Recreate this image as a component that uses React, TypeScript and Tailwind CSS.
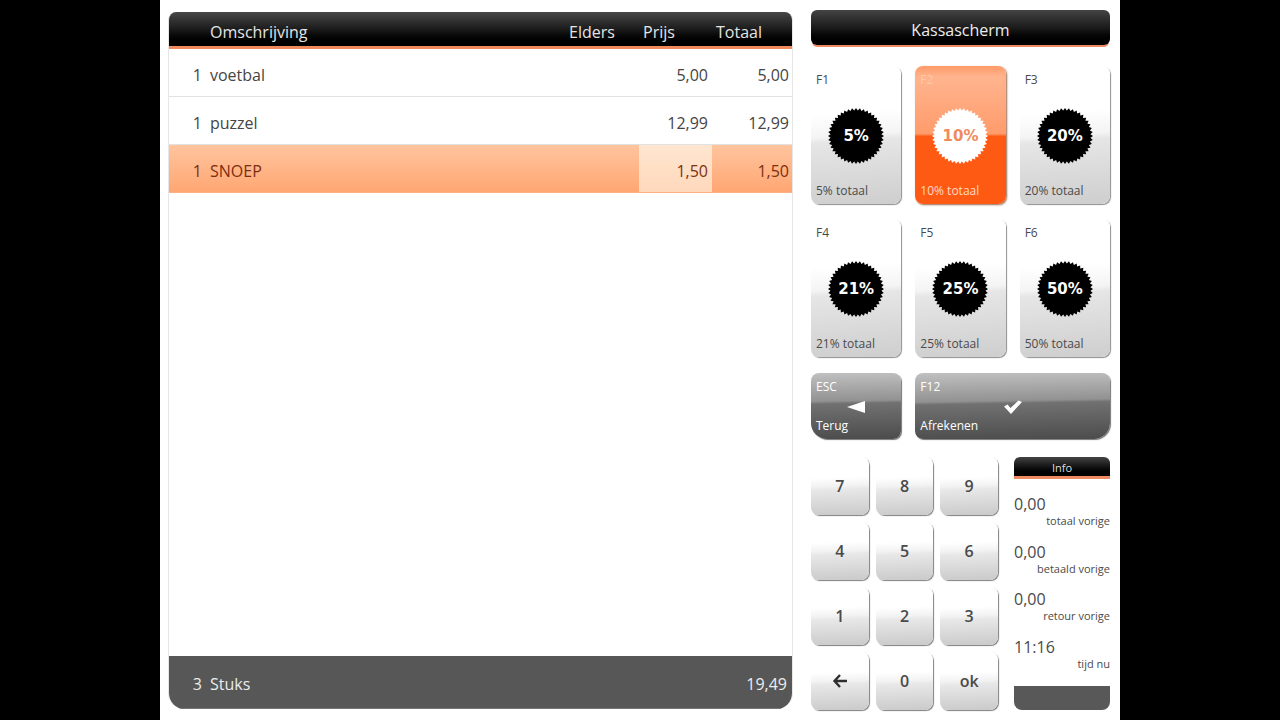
import { useState } from "react";

const lines = [
  { qty: 1, name: "voetbal", price: "5,00", total: "5,00" },
  { qty: 1, name: "puzzel", price: "12,99", total: "12,99" },
  { qty: 1, name: "SNOEP", price: "1,50", total: "1,50" },
];

const discounts = [
  { hotkey: "F1", percent: "5%" },
  { hotkey: "F2", percent: "10%" },
  { hotkey: "F3", percent: "20%" },
  { hotkey: "F4", percent: "21%" },
  { hotkey: "F5", percent: "25%" },
  { hotkey: "F6", percent: "50%" },
];

const keys = ["7", "8", "9", "4", "5", "6", "1", "2", "3", "back", "0", "ok"];

const info = [
  { label: "totaal vorige", value: "0,00" },
  { label: "betaald vorige", value: "0,00" },
  { label: "retour vorige", value: "0,00" },
  { label: "tijd nu", value: "11:16" },
];

const TEETH = 44;
const sealPoints = Array.from({ length: TEETH * 2 }, (_, i) => {
  const r = i % 2 === 0 ? 28 : 25.5;
  const a = (i * Math.PI) / TEETH;
  return `${(28 + r * Math.cos(a)).toFixed(2)},${(28 + r * Math.sin(a)).toFixed(2)}`;
}).join(" ");

function Seal({ text, active }: { text: string; active: boolean }) {
  return (
    <span className="grid place-items-center">
      <svg
        viewBox="0 0 56 56"
        aria-hidden="true"
        className={`col-start-1 row-start-1 size-14 ${active ? "fill-white" : "fill-black"}`}
      >
        <polygon points={sealPoints} />
      </svg>
      <span
        className={`col-start-1 row-start-1 font-['DejaVu_Sans',sans-serif] text-[15px] font-bold ${active ? "text-[#f08a5c]" : "text-white"}`}
      >
        {text}
      </span>
    </span>
  );
}

function Receipt() {
  const [selected, setSelected] = useState(2);
  return (
    <section className="mt-3 mb-[11px] flex min-w-0 flex-1 flex-col overflow-hidden rounded-t-lg rounded-b-2xl border-x border-[#e6e6e6] bg-white">
      <table className="-mx-px table-fixed border-separate border-spacing-0 text-base text-[#454545]">
        <colgroup>
          <col className="w-[38px]" />
          <col />
          <col className="w-[74px]" />
          <col className="w-[73px]" />
          <col className="w-[81px]" />
        </colgroup>
        <thead>
          <tr className="h-[37px] text-left text-[#e4e4e4] [&>*]:border-b-3 [&>*]:border-[#f08a5c] [&>*]:bg-linear-to-b [&>*]:from-[#484848] [&>*]:via-[#1c1c1c] [&>*]:to-black [&>*]:px-1 [&>*]:pt-[6px] [&>*]:pb-0 [&>*]:font-medium">
            <td />
            <th scope="col">Omschrijving</th>
            <th scope="col">Elders</th>
            <th scope="col">Prijs</th>
            <th scope="col">Totaal</th>
          </tr>
        </thead>
        <tbody>
          {lines.map((line, i) => {
            const on = i === selected;
            return (
              <tr
                key={line.name}
                onClick={() => setSelected(i)}
                className={
                  on
                    ? "h-12 text-[#7c2f10] [&>td]:border-b [&>td]:border-[#ffb084] [&>td]:bg-linear-to-b [&>td]:from-[#ffc49e] [&>td]:to-[#ffa672] [&>td]:px-1 [&>td]:pt-1"
                    : "h-12 [&>td]:border-b [&>td]:border-[#e2e2e2] [&>td]:px-1 [&>td]:pt-1"
                }
              >
                <td className="text-right">{line.qty}</td>
                <td>{line.name}</td>
                <td />
                <td className={on ? "from-[#ffe6d0]! to-[#ffd8bb]! text-right" : "text-right"}>
                  {line.price}
                </td>
                <td className="text-right">{line.total}</td>
              </tr>
            );
          })}
        </tbody>
      </table>
      <footer className="-mx-px mt-auto flex h-[53px] items-center border-b border-[#777] bg-[#575757] pt-[3px] pr-[6px] text-base text-[#ececec]">
        <span className="w-[34px] text-right">3</span>
        <span className="ml-2">Stuks</span>
        <span className="ml-auto">19,49</span>
      </footer>
    </section>
  );
}

const lightFace =
  "bg-[linear-gradient(176deg,#fff_0%,#fff_34%,#f4f4f4_50%,#e6e6e6_54%,#cecece_100%)] shadow-[1px_1px_1px_#8f8f8f]";
const orangeFace =
  "bg-[linear-gradient(180deg,#ff9a68_0%,#ffb48e_8%,#ff9c6c_49%,#ff5a14_51%,#ff5a14_100%)] shadow-[1px_1px_2px_#9a6a50]";
const darkFace =
  "bg-[linear-gradient(179deg,#c0c0c0_0%,#929292_42%,#717171_46%,#4c4c4c_100%)] shadow-[1px_1px_1px_#777] text-white";

function DiscountButtons() {
  const [active, setActive] = useState("F2");
  return (
    <div className="mt-[21px] grid grid-cols-3 gap-x-[14px] gap-y-[15px]">
      {discounts.map((d) => {
        const on = d.hotkey === active;
        return (
          <button
            key={d.hotkey}
            type="button"
            onClick={() => setActive(d.hotkey)}
            className={`flex h-[138px] flex-col justify-between rounded-lg px-[5px] pt-[5px] pb-1 text-left text-xs leading-[18px] ${
              on ? `${orangeFace} text-[#ffd9c0]` : `${lightFace} text-[#4a4a4a]`
            }`}
          >
            <span className={on ? "text-[#ffc9a8]" : ""}>{d.hotkey}</span>
            <Seal text={d.percent} active={on} />
            <span>{d.percent} totaal</span>
          </button>
        );
      })}
    </div>
  );
}

function ActionButtons() {
  return (
    <div className="mt-4 grid grid-cols-3 gap-x-[14px] text-xs leading-[18px]">
      <button
        type="button"
        className={`flex h-[66px] flex-col justify-between rounded-lg rounded-bl-2xl px-[5px] pt-[5px] pb-1 text-left ${darkFace}`}
      >
        <span>ESC</span>
        <svg viewBox="0 0 18 12" aria-hidden="true" className="h-3 w-[18px] self-center fill-white">
          <path d="M0 6 18 0v12z" />
        </svg>
        <span>Terug</span>
      </button>
      <button
        type="button"
        className={`col-span-2 flex h-[66px] flex-col justify-between rounded-lg rounded-br-2xl px-[5px] pt-[5px] pb-1 text-left ${darkFace}`}
      >
        <span>F12</span>
        <svg viewBox="0 0 18 14" aria-hidden="true" className="h-[14px] w-[18px] self-center fill-white">
          <path d="M0 6.5 3.5 4.5 6.5 8 14.5.5 18 2 7 14z" />
        </svg>
        <span>Afrekenen</span>
      </button>
    </div>
  );
}

function Keypad() {
  return (
    <div className="grid w-[187px] grid-cols-3 content-start gap-[7px]">
      {keys.map((k) => (
        <button
          key={k}
          type="button"
          aria-label={k === "back" ? "Wissen" : undefined}
          className="grid h-[58px] place-items-center rounded-lg bg-[linear-gradient(178deg,#fff_0%,#fff_35%,#f2f2f2_50%,#e8e8e8_55%,#cacaca_100%)] text-base font-semibold text-[#4a4a4a] shadow-[1px_1px_1px_#808080]"
        >
          {k === "back" ? (
            <svg
              viewBox="0 0 16 14"
              aria-hidden="true"
              className="h-[14px] w-4 fill-none stroke-[#2e2e2e] stroke-[2.4]"
            >
              <path d="M8 1 2.5 7 8 13M2.5 7H15" />
            </svg>
          ) : (
            k
          )}
        </button>
      ))}
    </div>
  );
}

function InfoPanel() {
  return (
    <aside className="flex w-24 flex-col">
      <h2 className="h-[22px] rounded-t-md border-b-3 border-[#ee8a60] bg-linear-to-b from-[#444] to-black text-center text-[11px] leading-[22px] text-[#dedede]">
        Info
      </h2>
      <dl className="flex flex-1 flex-col justify-between py-[15px] text-[#4a4a4a]">
        {info.map((item) => (
          <div key={item.label} className="flex flex-col-reverse">
            <dt className="text-right text-[11px] leading-[14px]">{item.label}</dt>
            <dd className="text-base leading-5">{item.value}</dd>
          </div>
        ))}
      </dl>
      <div className="h-6 rounded-b-lg bg-[#585858]" />
    </aside>
  );
}

export default function App() {
  return (
    <div className="min-h-screen bg-black font-['Open_Sans','Noto_Sans',sans-serif]">
      <main className="mx-auto flex min-h-screen w-3/4 gap-[18px] bg-white pr-[10px] pl-2">
        <Receipt />
        <div className="flex w-[299px] flex-col pt-[10px] pb-2">
          <h1 className="h-[35px] rounded-md bg-linear-to-b from-[#444] via-[#1c1c1c] to-black text-center text-base leading-10 font-medium text-[#ececec] shadow-[0_3px_0_-1px_#ee8a60]">
            Kassascherm
          </h1>
          <DiscountButtons />
          <ActionButtons />
          <div className="mt-[18px] flex justify-between">
            <Keypad />
            <InfoPanel />
          </div>
        </div>
      </main>
    </div>
  );
}
